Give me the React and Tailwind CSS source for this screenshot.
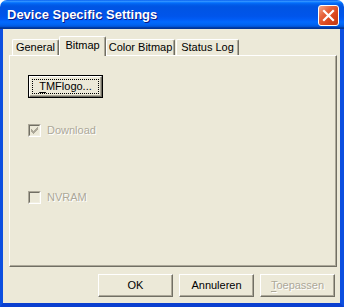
import React from "react";

const font = { fontFamily: '"Liberation Sans", Arial, sans-serif' };

function Check({ checked }) {
  const cols = [2, 3, 4, 3, 2, 1, 0];
  return (
    <div className="w-[13px] h-[13px] border border-t-[#aca899] border-l-[#aca899] border-r-white border-b-white">
      <div className="w-[11px] h-[11px] border border-t-[#716f64] border-l-[#716f64] border-r-[#f1efe2] border-b-[#f1efe2] bg-[#ece9d8] relative">
        {checked && (
          <svg width="9" height="9" viewBox="0 0 9 9" className="absolute left-0 top-0" shapeRendering="crispEdges">
            {cols.map((r, c) => (
              <rect key={c} x={c + 1} y={r + 1} width="1" height="3" fill="#aca899" />
            ))}
          </svg>
        )}
      </div>
    </div>
  );
}

function Btn({ children, disabled }) {
  return (
    <div className="w-[75px] h-[23px] border border-t-white border-l-white border-r-[#716f64] border-b-[#716f64] shadow-[inset_-1px_-1px_0_#aca899] bg-[#ece9d8] flex items-center justify-center">
      <span
        className={
          "text-[11px] leading-[13px] " +
          (disabled ? "text-[#aca899] [text-shadow:1px_1px_0_#ffffff]" : "text-black")
        }
      >
        {children}
      </span>
    </div>
  );
}

function Tab({ label, w, selected }) {
  if (selected) {
    return (
      <div
        className="relative z-10 h-[20px] -mb-[1px] border-t border-l border-t-white border-l-white border-r border-r-[#716f64] shadow-[inset_-1px_0_0_#aca899] rounded-t-[2px] bg-[#ece9d8] flex justify-center pt-[2px]"
        style={{ width: w }}
      >
        <span className="text-[11px] leading-[13px] text-black">{label}</span>
      </div>
    );
  }
  return (
    <div
      className="h-[16px] border-t border-l border-t-white border-l-white border-r border-r-[#716f64] shadow-[inset_-1px_0_0_#aca899] rounded-t-[2px] bg-[#ece9d8] flex justify-center pt-[1px]"
      style={{ width: w }}
    >
      <span className="text-[11px] leading-[13px] text-black">{label}</span>
    </div>
  );
}

export default function App() {
  return (
    <div className="w-[344px] h-[307px] flex flex-col bg-white" style={font}>
      <div className="h-[29px] w-full rounded-t-[7px] bg-[linear-gradient(to_bottom,#0058ee_0%,#3593ff_4%,#288eff_6%,#127dff_8%,#036ffc_10%,#0262ee_14%,#0057e5_20%,#0054e3_24%,#0055eb_56%,#005bf5_66%,#026afe_76%,#0062ef_86%,#0052d6_92%,#0040ab_94%,#003092_100%)] flex items-center pl-[7px] pr-[5px]">
        <span className="text-[13px] font-bold text-white leading-[16px] [text-shadow:1px_1px_0_#0a1883] mt-[1px]">
          Device Specific Settings
        </span>
        <div className="ml-auto w-[21px] h-[21px] rounded-[3px] border border-white bg-[linear-gradient(135deg,#f5a789_0%,#e6633b_35%,#d9461d_65%,#c23a12_100%)] relative mt-[1px]">
          <svg width="19" height="19" viewBox="0 0 19 19" className="absolute left-0 top-0">
            <path d="M5 5 L14 14 M14 5 L5 14" stroke="white" strokeWidth="2.2" strokeLinecap="square" />
          </svg>
        </div>
      </div>
      <div className="flex-1 flex flex-col bg-[#ece9d8] border-l-[3px] border-r-[4px] border-b-[4px] border-l-[#0c4fe0] border-r-[#0c4fe0] border-b-[#0a3fd0] pl-[6px] pr-[3px] pt-[7px]">
        <div className="h-[19px] flex items-end pl-[3px]">
          <Tab label="General" w={47} />
          <Tab label="Bitmap" w={47} selected />
          <Tab label="Color Bitmap" w={69} />
          <div className="w-[1px]" />
          <Tab label="Status Log" w={63} />
        </div>
        <div className="h-[212px] w-[328px] border border-t-white border-l-white border-r-[#716f64] border-b-[#716f64] shadow-[inset_-1px_-1px_0_#aca899] pl-[18px] pt-[19px] flex flex-col">
          <div className="w-[75px] h-[23px] border border-black">
            <div className="w-full h-full border border-t-white border-l-white border-r-[#716f64] border-b-[#716f64] shadow-[inset_-1px_-1px_0_#aca899] p-[2px]">
              <div className="w-full h-full border border-dotted border-black flex items-center justify-center">
                <span className="text-[11px] leading-[13px] text-black">
                  <span className="underline underline-offset-[2px]">T</span>MFlogo...
                </span>
              </div>
            </div>
          </div>
          <div className="mt-[26px] flex items-center gap-[6px] h-[13px]">
            <Check checked />
            <span className="text-[11px] leading-[13px] text-[#aca899] [text-shadow:1px_1px_0_#ffffff]">Download</span>
          </div>
          <div className="mt-[54px] flex items-center gap-[6px] h-[13px]">
            <Check />
            <span className="text-[11px] leading-[13px] text-[#aca899] [text-shadow:1px_1px_0_#ffffff]">NVRAM</span>
          </div>
        </div>
        <div className="mt-[7px] flex justify-end gap-[6px] pr-[2px]">
          <Btn>OK</Btn>
          <Btn>Annuleren</Btn>
          <Btn disabled>
            <span className="underline underline-offset-[2px]">T</span>oepassen
          </Btn>
        </div>
      </div>
    </div>
  );
}
